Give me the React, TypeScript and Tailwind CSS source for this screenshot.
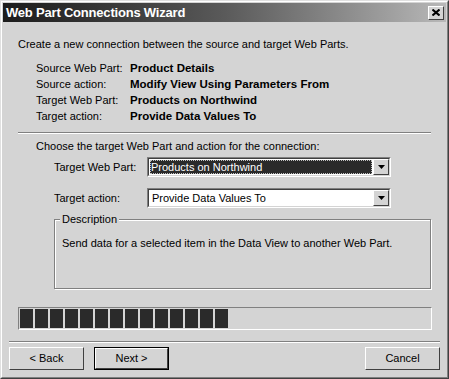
import React from 'react'

const FONT = { fontFamily: '"Liberation Sans", Arial, sans-serif' }

const SUMMARY = [
  { label: 'Source Web Part:', value: 'Product Details' },
  { label: 'Source action:', value: 'Modify View Using Parameters From' },
  { label: 'Target Web Part:', value: 'Products on Northwind' },
  { label: 'Target action:', value: 'Provide Data Values To' },
]

function DropArrow() {
  return (
    <div className="w-[16px] h-full bg-[#d4d4d4] border-t border-l border-t-white border-l-white border-b border-r border-b-[#404040] border-r-[#404040] flex items-center justify-center">
      <svg width="7" height="4" viewBox="0 0 7 4">
        <polygon points="0,0 7,0 3.5,4" fill="#000" />
      </svg>
    </div>
  )
}

function Combo({ value, focused }: { value: string; focused?: boolean }) {
  return (
    <div className="w-[244px] h-[20px] border border-t-[#808080] border-l-[#808080] border-b-white border-r-white">
      <div className="h-full border border-t-[#404040] border-l-[#404040] border-b-[#d4d4d4] border-r-[#d4d4d4] bg-white flex items-stretch">
        <div className="flex-1 flex items-center p-[1px]">
          {focused ? (
            <div className="w-full h-full bg-[#2a2a2a] text-white flex items-center pl-[1px] outline outline-1 outline-dotted outline-[#c0c0c0] -outline-offset-1 text-[11px] leading-none">
              {value}
            </div>
          ) : (
            <div className="w-full h-full flex items-center pl-[2px] text-[11px] leading-none">{value}</div>
          )}
        </div>
        <DropArrow />
      </div>
    </div>
  )
}

function Button({ children, isDefault }: { children: React.ReactNode; isDefault?: boolean }) {
  return (
    <div className={`w-[75px] h-[23px] ${isDefault ? 'border border-black' : ''}`}>
      <div className="w-full h-full bg-[#d4d4d4] border border-t-white border-l-white border-b-[#404040] border-r-[#404040] flex items-center justify-center text-[11px]">
        {children}
      </div>
    </div>
  )
}

export default function App() {
  return (
    <div className="w-[449px] h-[379px] bg-[#d4d4d4] text-black border border-t-[#e0e0e0] border-l-[#e0e0e0] border-b-[#404040] border-r-[#404040] overflow-hidden whitespace-nowrap" style={FONT}>
      <div className="h-full border border-t-white border-l-white border-b-[#808080] border-r-[#808080] p-[1px] flex flex-col">
        {/* title bar */}
        <div className="h-[19px] flex items-center justify-between pl-[3px] pr-[2px] bg-gradient-to-r from-[#1c1c1c] via-[#5a5a5a] to-[#b8b8b8]">
          <span className="text-white font-bold text-[13px] tracking-[-0.2px]">Web Part Connections Wizard</span>
          <div className="w-[16px] h-[14px] bg-[#d4d4d4] border border-t-white border-l-white border-b-[#404040] border-r-[#404040] flex items-center justify-center">
            <svg width="8" height="7" viewBox="0 0 8 7">
              <path d="M0.5 0.5 L7.5 6.5 M7.5 0.5 L0.5 6.5" stroke="#000" strokeWidth="2" />
            </svg>
          </div>
        </div>

        <div className="flex-1 flex flex-col pt-[14px]">
          <div className="pl-[15px] text-[11px] leading-[16px]">
            Create a new connection between the source and target Web Parts.
          </div>
          <div className="mt-[8px] pl-[33px] flex flex-col text-[11px] leading-[16px]">
            {SUMMARY.map(r => (
              <div key={r.label} className="flex">
                <span className="w-[94px]">{r.label}</span>
                <span className="font-bold text-[11.5px]">{r.value}</span>
              </div>
            ))}
          </div>

          <div className="mt-[8px] ml-[15px] mr-[15px] h-[2px] border-t border-b border-t-[#808080] border-b-white" />

          <div className="mt-[4px] pl-[33px] text-[11px] leading-[16px]">
            Choose the target Web Part and action for the connection:
          </div>
          <div className="mt-[3px] pl-[51px] flex items-center text-[11px]">
            <span className="w-[93px]">Target Web Part:</span>
            <Combo value="Products on Northwind" focused />
          </div>
          <div className="mt-[11px] pl-[51px] flex items-center text-[11px]">
            <span className="w-[93px]">Target action:</span>
            <Combo value="Provide Data Values To" />
          </div>

          <div className="relative mt-[11px] ml-[51px] mr-[15px] h-[70px] border border-[#808080] shadow-[inset_1px_1px_0_white,1px_1px_0_white]">
            <span className="absolute -top-[9px] left-[5px] px-[2px] bg-[#d4d4d4] text-[11px] leading-[16px]">Description</span>
            <div className="pt-[15px] pl-[7px] text-[11px] leading-[16px]">
              Send data for a selected item in the Data View to another Web Part.
            </div>
          </div>

          <div className="mt-[18px] ml-[15px] mr-[14px] h-[23px] border border-t-[#808080] border-l-[#808080] border-b-white border-r-white flex items-center gap-[2px] px-[1px]">
            {Array.from({ length: 14 }).map((_, i) => (
              <div key={i} className="w-[13px] h-[19px] bg-[#2a2a2a]" />
            ))}
          </div>

          <div className="mt-[11px] ml-[6px] mr-[6px] h-[2px] border-t border-b border-t-[#808080] border-b-white" />

          <div className="mt-[4px] px-[6px] flex items-center">
            <Button>&lt; Back</Button>
            <div className="ml-[10px]">
              <Button isDefault>Next &gt;</Button>
            </div>
            <div className="ml-auto">
              <Button>Cancel</Button>
            </div>
          </div>
        </div>
      </div>
    </div>
  )
}
